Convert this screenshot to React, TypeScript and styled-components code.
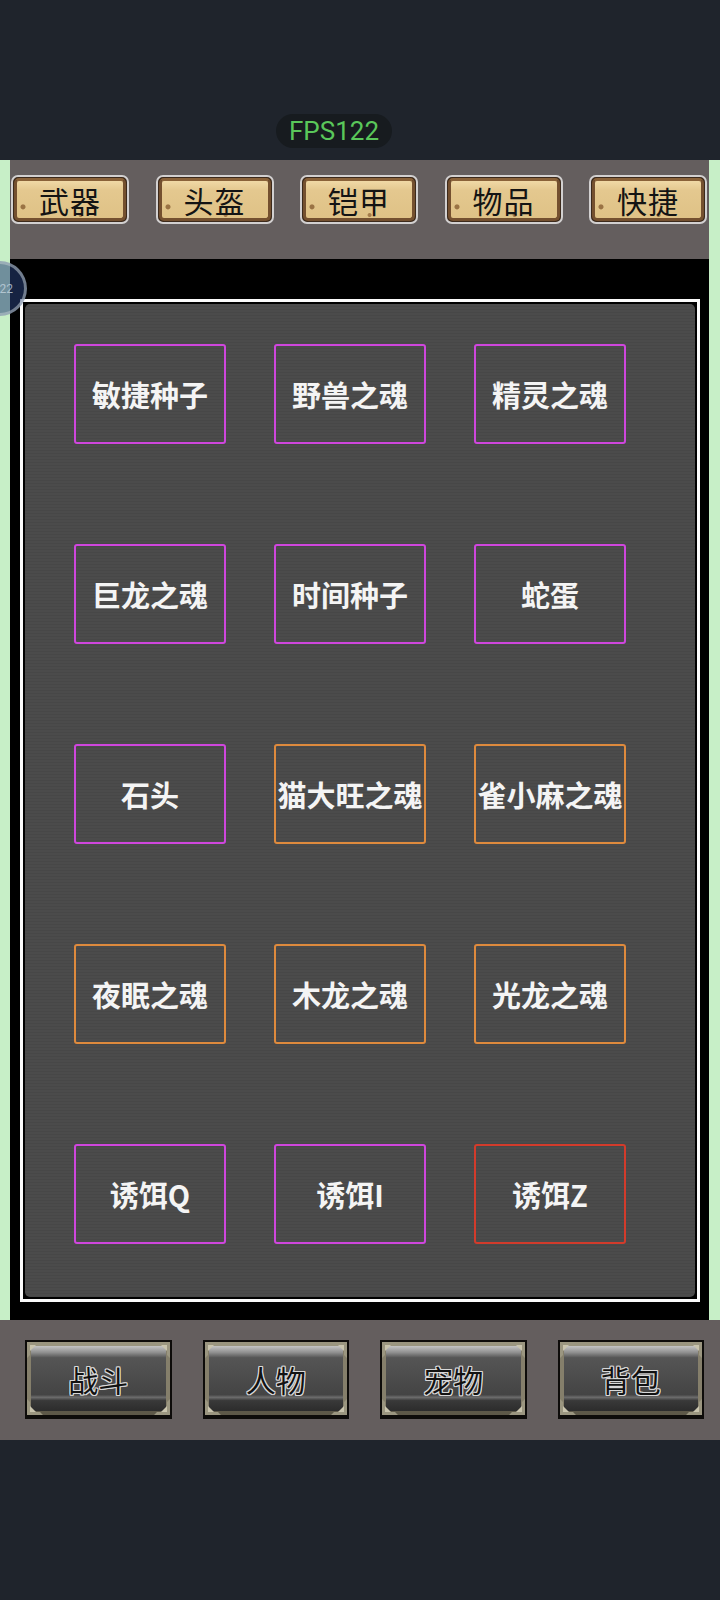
import styled, { createGlobalStyle } from "styled-components";

type Rarity = "magic" | "rare" | "epic";

type Item = {
  name: string;
  rarity: Rarity;
};

const tabs = ["武器", "头盔", "铠甲", "物品", "快捷"];
const navs = ["战斗", "人物", "宠物", "背包"];

const items: Item[] = [
  { name: "敏捷种子", rarity: "magic" },
  { name: "野兽之魂", rarity: "magic" },
  { name: "精灵之魂", rarity: "magic" },
  { name: "巨龙之魂", rarity: "magic" },
  { name: "时间种子", rarity: "magic" },
  { name: "蛇蛋", rarity: "magic" },
  { name: "石头", rarity: "magic" },
  { name: "猫大旺之魂", rarity: "rare" },
  { name: "雀小麻之魂", rarity: "rare" },
  { name: "夜眠之魂", rarity: "rare" },
  { name: "木龙之魂", rarity: "rare" },
  { name: "光龙之魂", rarity: "rare" },
  { name: "诱饵Q", rarity: "magic" },
  { name: "诱饵I", rarity: "magic" },
  { name: "诱饵Z", rarity: "epic" },
];

const rarityColor: Record<Rarity, string> = {
  magic: "#cf46dd",
  rare: "#de8a3d",
  epic: "#d23b2b",
};

const corners = ["tl", "tr", "bl", "br"] as const;

const App = () => {
  return (
    <Page>
      <GlobalStyle />
      <Header>
        <FpsPill>FPS122</FpsPill>
      </Header>

      <GameRow>
        <SideStrip $width={10} />
        <Main>
          <TabBar>
            {tabs.map((tab) => (
              <TabButton key={tab}>
                <TabFace>{tab}</TabFace>
              </TabButton>
            ))}
          </TabBar>
          <Stage>
            <Frame>
              <Board>
                <Grid>
                  {items.map((item) => (
                    <Cell key={item.name} $color={rarityColor[item.rarity]}>
                      {item.name}
                    </Cell>
                  ))}
                </Grid>
              </Board>
            </Frame>
          </Stage>
        </Main>
        <SideStrip $width={11} />
      </GameRow>

      <BottomBar>
        {navs.map((nav) => (
          <MetalButton key={nav}>
            <MetalFace>{nav}</MetalFace>
            {corners.map((c) => (
              <Corner key={c} $pos={c} viewBox="0 0 16 16">
                <path d="M0 0 H16 L13 3 H6 Q3 3 3 6 V13 L0 16 Z" fill="#9b9680" />
                <path d="M3 3 L9 3 L3 9 Z" fill="#c9c4ad" />
              </Corner>
            ))}
          </MetalButton>
        ))}
      </BottomBar>

      <FloatBall>
        <span>22</span>
      </FloatBall>
    </Page>
  );
};

const GlobalStyle = createGlobalStyle`
  body {
    margin: 0;
    background: #1f242c;
    font-family: "Noto Sans CJK SC", "Noto Sans", sans-serif;
  }
`;

const Page = styled.div`
  position: relative;
  width: 720px;
  min-height: 1600px;
  overflow: hidden;
  background: #1f242c;
`;

const Header = styled.div`
  height: 160px;
  box-sizing: border-box;
  padding: 114px 0 0 276px;
`;

const FpsPill = styled.div`
  width: 116px;
  height: 34px;
  border-radius: 17px;
  background: #171b1f;
  color: #5ac75a;
  font-family: Roboto, "Liberation Sans", sans-serif;
  font-size: 26px;
  line-height: 34px;
  text-align: center;
`;

const GameRow = styled.div`
  display: flex;
  height: 1160px;
`;

const SideStrip = styled.div<{ $width: number }>`
  width: ${(p) => p.$width}px;
  flex-shrink: 0;
  background: #c7efc7;
`;

const Main = styled.div`
  flex: 1;
  display: flex;
  flex-direction: column;
`;

const TabBar = styled.div`
  height: 99px;
  box-sizing: border-box;
  padding: 15px 2px 0 1px;
  background: #645e5e;
  display: flex;
  justify-content: space-between;
  align-items: flex-start;
`;

const TabButton = styled.div`
  width: 118px;
  height: 49px;
  box-sizing: border-box;
  border: 2px solid #d2d0d0;
  border-radius: 7px;
  background: #3c2a1c;
  padding: 1px;
`;

const TabFace = styled.div`
  height: 100%;
  box-sizing: border-box;
  border: 3px solid #74502f;
  border-top-color: #8a6239;
  border-radius: 5px;
  background:
    radial-gradient(circle at 6px 70%, #9a7344 0 2px, transparent 3px),
    radial-gradient(circle at 60% 92%, #a57d4b 0 1.5px, transparent 2.5px),
    linear-gradient(180deg, #f0d9a6 0%, #e4c88f 25%, #dfc286 100%);
  display: flex;
  align-items: center;
  justify-content: center;
  color: #141414;
  font-size: 30px;
  line-height: 1;
  letter-spacing: 1px;
`;

const Stage = styled.div`
  flex: 1;
  background: #000;
  box-sizing: border-box;
  padding: 40px 9px 18px 10px;
`;

const Frame = styled.div`
  height: 100%;
  box-sizing: border-box;
  border: 3px solid #fafafa;
  padding: 2px;
  background: #000;
`;

const Board = styled.div`
  height: 100%;
  box-sizing: border-box;
  border-radius: 5px;
  padding: 40px 0 0 49px;
  background: repeating-linear-gradient(
    180deg,
    #4b4b4b 0px,
    #4b4b4b 2px,
    #474747 2px,
    #474747 3px
  );
`;

const Grid = styled.div`
  display: grid;
  grid-template-columns: repeat(3, 152px);
  grid-auto-rows: 100px;
  column-gap: 48px;
  row-gap: 100px;
`;

const Cell = styled.div<{ $color: string }>`
  box-sizing: border-box;
  border: 2px solid ${(p) => p.$color};
  border-radius: 3px;
  display: flex;
  align-items: center;
  justify-content: center;
  white-space: nowrap;
  color: #f4f4f4;
  font-size: 29px;
  font-weight: 700;
`;

const BottomBar = styled.div`
  height: 120px;
  box-sizing: border-box;
  padding: 20px 16px 0 25px;
  background: #645e5e;
  display: flex;
  gap: 31px;
  align-items: flex-start;

  & > :last-child {
    margin-left: auto;
  }
`;

const MetalButton = styled.div`
  position: relative;
  width: 150px;
  height: 79px;
  box-sizing: border-box;
  padding: 2px 2px 4px;
  background: #0e0c0a;
`;

const MetalFace = styled.div`
  height: 100%;
  box-sizing: border-box;
  border: 4px solid #857f6b;
  border-top-color: #9a957f;
  border-bottom-color: #5d5848;
  background: linear-gradient(
    180deg,
    #c4c4c4 0%,
    #8f8f8f 10%,
    #555 18%,
    #4d4d4d 45%,
    #444 75%,
    #6c6c6c 79%,
    #393939 84%,
    #2c2c2c 100%
  );
  display: flex;
  align-items: center;
  justify-content: center;
  color: #121212;
  font-size: 30px;
  line-height: 1;
  text-shadow:
    1px 0 0 #d8d8d8,
    -1px 0 0 #d8d8d8,
    0 1px 0 #d8d8d8,
    0 -1px 0 #d8d8d8,
    1px 1px 0 #d8d8d8,
    -1px -1px 0 #d8d8d8,
    1px -1px 0 #d8d8d8,
    -1px 1px 0 #d8d8d8;
`;

const Corner = styled.svg<{ $pos: "tl" | "tr" | "bl" | "br" }>`
  position: absolute;
  width: 16px;
  height: 16px;
  top: ${(p) => (p.$pos[0] === "t" ? "2px" : "auto")};
  bottom: ${(p) => (p.$pos[0] === "b" ? "4px" : "auto")};
  left: ${(p) => (p.$pos[1] === "l" ? "2px" : "auto")};
  right: ${(p) => (p.$pos[1] === "r" ? "2px" : "auto")};
  transform: scale(
    ${(p) => (p.$pos[1] === "r" ? -1 : 1)},
    ${(p) => (p.$pos[0] === "b" ? -1 : 1)}
  );
`;

const FloatBall = styled.div`
  position: absolute;
  top: 261px;
  left: -28px;
  width: 55px;
  height: 55px;
  box-sizing: border-box;
  border-radius: 50%;
  border: 3px solid rgba(190, 200, 205, 0.55);
  background: rgba(40, 64, 120, 0.55);
  display: flex;
  align-items: center;
  justify-content: flex-end;
  padding-right: 11px;

  span {
    color: rgba(200, 215, 225, 0.75);
    font-family: Roboto, sans-serif;
    font-size: 12px;
  }
`;

export default App;
